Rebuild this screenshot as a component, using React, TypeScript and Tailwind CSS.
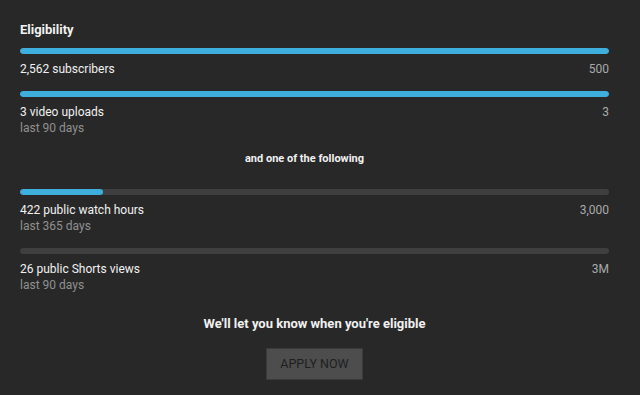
export default function App() {
  const items = [
    { label: "2,562 subscribers", target: "500", pct: 100 },
    { label: "3 video uploads", sub: "last 90 days", target: "3", pct: 100 },
  ];
  const options = [
    { label: "422 public watch hours", sub: "last 365 days", target: "3,000", pct: 14.1 },
    { label: "26 public Shorts views", sub: "last 90 days", target: "3M", pct: 0 },
  ];

  const Row = ({ item }: { item: { label: string; sub?: string; target: string; pct: number } }) => (
    <div>
      <div className="h-1.5 w-full rounded-full bg-[#3f3f3f] overflow-hidden">
        <div className="h-full rounded-full bg-[#3eaedc]" style={{ width: `${item.pct}%` }} />
      </div>
      <div className="mt-[7px] flex justify-between text-[12px] leading-4">
        <div>
          <div className="text-[#f1f1f1]">{item.label}</div>
          {item.sub && <div className="text-[#909090]">{item.sub}</div>}
        </div>
        <div className="text-[#aaaaaa]">{item.target}</div>
      </div>
    </div>
  );

  return (
    <div
      className="w-[640px] h-[395px] bg-[#282828] px-5 pt-[22px]"
      style={{ fontFamily: "Roboto, 'Liberation Sans', sans-serif" }}
    >
      <div className="w-[589px]">
        <h2 className="text-[13px] leading-4 font-bold text-[#f1f1f1]">Eligibility</h2>
        <div className="mt-2.5 flex flex-col gap-[14px]">
          {items.map((it) => (
            <Row key={it.label} item={it} />
          ))}
        </div>
        <p className="mt-[15px] pr-5 text-center text-[11px] leading-4 font-bold text-[#f1f1f1]">
          and one of the following
        </p>
        <div className="mt-[22px] flex flex-col gap-[14px]">
          {options.map((it) => (
            <Row key={it.label} item={it} />
          ))}
        </div>
        <p className="mt-[23px] text-center text-[13px] leading-4 font-bold text-[#f1f1f1]">
          We'll let you know when you're eligible
        </p>
        <div className="mt-4 flex justify-center">
          <button className="h-8 px-[13px] bg-[#4d4d4d] border border-[#3a3a3a] text-[12.5px] text-[#1f1f1f] uppercase">
            Apply now
          </button>
        </div>
      </div>
    </div>
  );
}
